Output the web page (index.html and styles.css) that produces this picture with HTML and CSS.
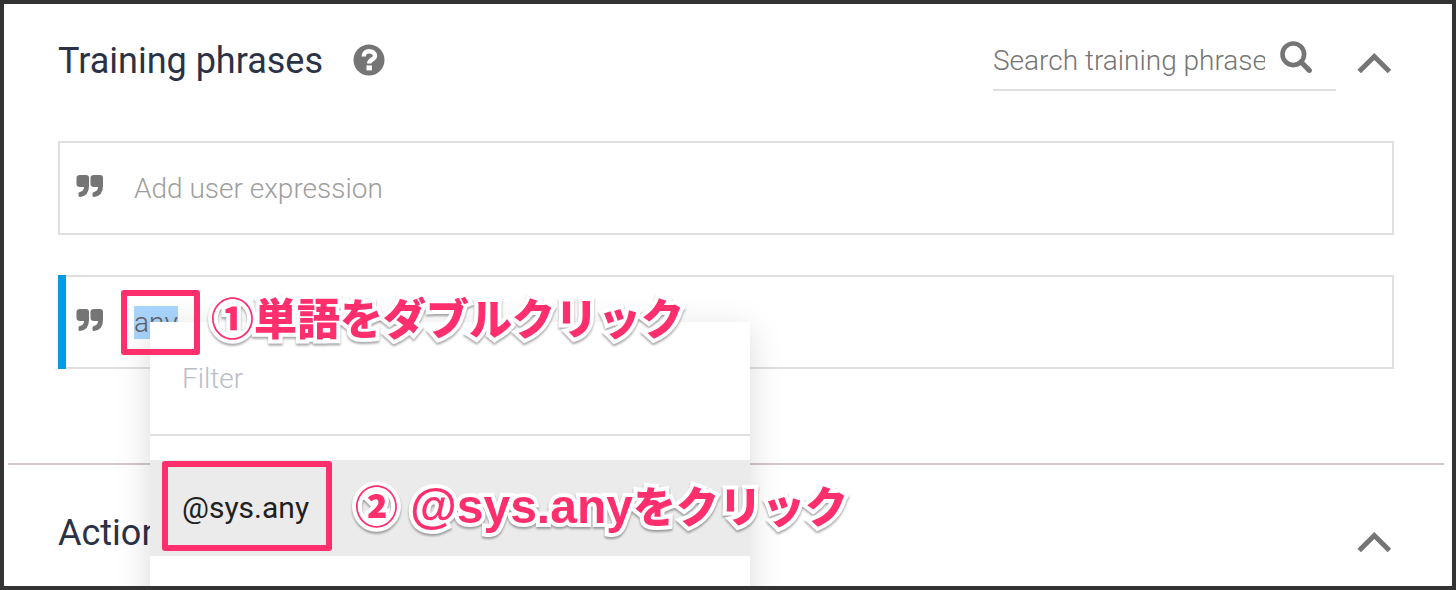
FILE: index.html
```html
<!DOCTYPE html>
<html lang="ja">
<head>
<meta charset="utf-8">
<meta name="viewport" content="width=device-width, initial-scale=1">
<title>Training phrases</title>
<link rel="stylesheet" href="styles.css">
</head>
<body>
<main class="frame">
  <section class="section">
    <header class="section-head">
      <h2 class="title">Training phrases</h2>
      <button class="icon-button help" type="button" aria-label="Help">
        <svg width="32" height="32" viewBox="0 0 32 32"><circle cx="16" cy="16" r="15.500" fill="#757575"/><path d="M10.700 12.600C10.700 9 13 7.200 16 7.200s6 1.600 6 4.800c0 3.600-5.800 3.400-5.800 7.600" fill="none" stroke="#fff" stroke-width="4.400"/><path d="M13.500 21.400h5.400v5h-5.400z" fill="#fff"/></svg>
      </button>
      <div class="search">
        <input class="search-input" type="text" placeholder="Search training phrases" aria-label="Search training phrases">
        <button class="icon-button" type="button" aria-label="Search">
          <svg width="32" height="32" viewBox="0 0 32 32" fill="none" stroke="#757575"><circle cx="13.300" cy="13.300" r="10.800" stroke-width="4.600"/><path d="M21 21l8.300 8.300" stroke-width="5.200" stroke-linecap="round"/></svg>
        </button>
      </div>
      <button class="icon-button collapse" type="button" aria-label="Collapse training phrases">
        <svg width="38" height="22" viewBox="0 0 38 22"><path d="M3.200 18.600L18.300 3.600l15.100 15" fill="none" stroke="#757575" stroke-width="5"/></svg>
      </button>
    </header>
    <div class="phrase">
      <svg class="quote" width="28" height="24" viewBox="0 0 28 24" fill="#757575"><path id="mark" d="M4 1h6q3 0 3 3v8q0 10-9 11-1.500 0-1.500-1.500v-2q0-1.500 1.500-1.500 4-1 4-5H4q-3.500 0-3.500-3V4q0-3 3.500-3z"/><use href="#mark" x="14"/></svg>
      <input class="phrase-input" type="text" placeholder="Add user expression" aria-label="Add user expression">
    </div>
    <div class="phrase phrase-active">
      <svg class="quote" width="28" height="24" viewBox="0 0 28 24" fill="#757575"><use href="#mark"/><use href="#mark" x="14"/></svg>
      <span class="phrase-text"><mark class="selected">any</mark></span>
      <div class="popup">
        <div class="filter"><input class="filter-input" type="text" placeholder="Filter" aria-label="Filter"></div>
        <button class="option" type="button">@sys.any</button>
        <span class="outline outline-option"></span>
        <span class="note note-option">② <span class="latin">@sys.any</span>をクリック</span>
      </div>
      <span class="outline outline-word"></span>
      <span class="note note-word">①単語をダブルクリック</span>
    </div>
  </section>
  <hr class="rule">
  <section class="section section-actions">
    <header class="section-head">
      <h2 class="title">Action</h2>
      <button class="icon-button collapse" type="button" aria-label="Collapse actions">
        <svg width="38" height="22" viewBox="0 0 38 22"><path d="M3.200 18.600L18.300 3.600l15.100 15" fill="none" stroke="#757575" stroke-width="5"/></svg>
      </button>
    </header>
  </section>
</main>
</body>
</html>
```
FILE: styles.css
```css
* { box-sizing: border-box; }
body {
  margin: 0;
  font-family: Roboto, "Noto Sans CJK JP", sans-serif;
  color: #2b3245;
  background: #fff;
}
.frame {
  position: relative;
  min-height: 100vh;
  border: 4px solid #333;
  overflow: hidden;
}
.section { padding: 26px 58px 0 54px; }
.section-head { display: flex; align-items: center; height: 62px; }
.title { margin: 0; font-size: 36px; line-height: 44px; font-weight: 400; }
.icon-button {
  display: flex;
  flex: none;
  padding: 0;
  border: 0;
  background: none;
}
.help { margin-left: 30px; padding-bottom: 2px; }
.collapse { margin-left: auto; }
.search {
  display: flex;
  align-self: flex-start;
  align-items: center;
  width: 343px;
  height: 61px;
  margin-left: auto;
  border-bottom: 2px solid #e0e0e0;
}
.search + .collapse { margin-left: 20px; padding-top: 6px; }
.search-input {
  width: 272px;
  height: 40px;
  margin-right: 15px;
  padding: 2px 0 0;
  border: 0;
  font: 300 28px/38px Roboto, sans-serif;
}
.search-input::placeholder { color: #757575; }
.search .icon-button { padding-bottom: 6px; }
.phrase {
  position: relative;
  display: flex;
  align-items: center;
  height: 94px;
  margin-top: 40px;
  padding-left: 16px;
  border: 2px solid #e0e0e0;
}
.section-head + .phrase { margin-top: 49px; }
.phrase-active::before {
  content: "";
  position: absolute;
  top: -2px;
  bottom: -2px;
  left: -2px;
  width: 8px;
  background: #039be5;
}
.quote { flex: none; margin: 0 30px 4px 0; }
.phrase-input {
  flex: 1;
  min-width: 0;
  padding: 2px 0 0;
  border: 0;
  font: 300 28px/40px Roboto, sans-serif;
}
.phrase-input::placeholder { color: #9e9e9e; }
.phrase-text { font-size: 28px; line-height: 33px; font-weight: 300; }
.selected { display: block; color: #616161; background: #a8d5fe; }
.popup {
  position: absolute;
  top: 45px;
  left: 90px;
  width: 600px;
  height: 320px;
  background: #fff;
  box-shadow: 0 8px 32px rgba(0, 0, 0, 0.15);
}
.filter { height: 114px; padding: 37px 32px 0; border-bottom: 2px solid #e0e0e0; }
.filter-input {
  width: 100%;
  padding: 0;
  border: 0;
  font: 300 28px/40px Roboto, sans-serif;
}
.filter-input::placeholder { color: #b9bdca; }
.option {
  width: 100%;
  height: 96px;
  margin-top: 24px;
  padding: 0 32px;
  border: 0;
  background: #ebebeb;
  color: #212121;
  font: 400 30px/40px Roboto, sans-serif;
  text-align: left;
}
.outline {
  position: absolute;
  border: 6px solid #ff2f6e;
  border-radius: 3px;
}
.outline-word { top: 13px; left: 61px; width: 79px; height: 65px; }
.outline-option { top: 139px; left: 12px; width: 170px; height: 90px; }
.note {
  position: absolute;
  color: #ff2f6e;
  font: 900 43px/60px "Liberation Sans", "Noto Sans CJK JP", sans-serif;
  white-space: nowrap;
  -webkit-text-stroke: 8px #fff;
  paint-order: stroke fill;
  filter: drop-shadow(0 2px 1px rgba(0, 0, 0, 0.35));
}
.latin { font-size: 48px; }
.note-word { top: 13px; left: 151px; }
.note-option { top: 155px; left: 205px; }
.rule {
  height: 2px;
  margin: 94px 8px 0 4px;
  border: 0;
  background: #d3c7c9;
}
.section-actions { padding-top: 37px; }
.section-actions .collapse { padding-top: 20px; }
```
